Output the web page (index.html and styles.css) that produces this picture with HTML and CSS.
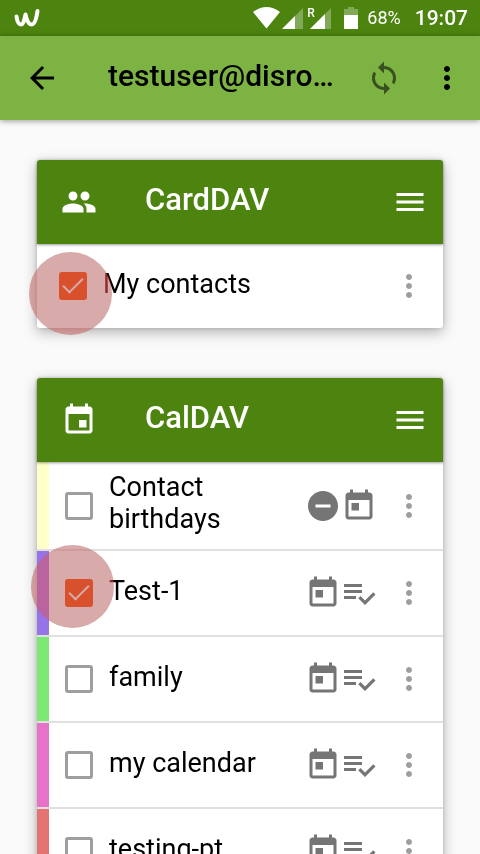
FILE: index.html
```html
<!DOCTYPE html>
<html lang="en">
<head>
<meta charset="utf-8">
<meta name="viewport" content="width=device-width, initial-scale=1">
<title>Account</title>
<link rel="stylesheet" href="styles.css">
</head>
<body>
<svg class="defs" aria-hidden="true">
  <symbol id="more" viewBox="0 0 24 24"><path d="M12 8c1.1 0 2-.9 2-2s-.9-2-2-2-2 .9-2 2 .9 2 2 2zm0 2c-1.1 0-2 .9-2 2s.9 2 2 2 2-.9 2-2-.9-2-2-2zm0 6c-1.1 0-2 .9-2 2s.9 2 2 2 2-.9 2-2-.9-2-2-2z"/></symbol>
  <symbol id="menu" viewBox="0 0 24 24"><path d="M3 18h18v-2H3v2zm0-5h18v-2H3v2zm0-7v2h18V6H3z"/></symbol>
  <symbol id="today" viewBox="0 0 24 24"><path d="M19 3h-1V1h-2v2H8V1H6v2H5c-1.11 0-1.99.9-1.99 2L3 19c0 1.1.89 2 2 2h14c1.1 0 2-.9 2-2V5c0-1.1-.9-2-2-2zm0 16H5V8h14v11zM7 10h5v5H7z"/></symbol>
  <symbol id="tasks" viewBox="0 0 24 24"><path d="M14 10H2v2h12v-2zm0-4H2v2h12V6zM2 16h8v-2H2v2zm19.500-4.500L23 13l-6.990 7-4.510-4.500L13 14l3.010 3 5.490-5.500z"/></symbol>
  <symbol id="readonly" viewBox="0 0 24 24"><path d="M12 2C6.480 2 2 6.480 2 12s4.480 10 10 10 10-4.480 10-10S17.520 2 12 2zm5 11H7v-2h10v2z"/></symbol>
</svg>

<div class="status">
  <svg class="logo" viewBox="0 0 28 24" aria-hidden="true"><path d="M4.500 10.500C5 14 6.500 18.500 9 18.500S12.500 13 13.500 8.500C14.500 13 16.500 18.500 19.500 18.500S24.500 12 25.500 5"/></svg>
  <div class="status-icons">
    <svg class="wifi" viewBox="0 0 27 22" aria-hidden="true"><path d="M0 5Q13.500-5 27 5L13.500 21.500z"/></svg>
    <svg class="signal" viewBox="0 0 21 21" aria-hidden="true"><path class="dim" d="M21 0v21H0z"/><path d="M13 8v13H0z"/></svg>
    <span class="roaming"><span class="roaming-mark">R</span><svg class="signal" viewBox="0 0 21 21" aria-hidden="true"><path class="dim" d="M21 0v21H0z"/><path d="M15 6v15H0z"/></svg></span>
    <svg class="battery" viewBox="0 0 14 22" aria-hidden="true"><path class="dim" d="M4 0h6v2h4v6H0V2h4z"/><path d="M0 8h14v14H0z"/></svg>
  </div>
  <span class="percent">68%</span>
  <span class="time">19:07</span>
</div>

<header class="appbar">
  <button class="btn" aria-label="Back"><svg class="icon" viewBox="0 0 24 24"><path d="M20 11H7.830l5.590-5.590L12 4l-8 8 8 8 1.410-1.410L7.830 13H20v-2z"/></svg></button>
  <h1 class="account">testuser@disro…</h1>
  <button class="btn sync" aria-label="Synchronize"><svg class="icon" viewBox="0 0 24 24"><path d="M12 4V1L8 5l4 4V6c3.310 0 6 2.690 6 6 0 1.010-.25 1.970-.7 2.800l1.460 1.460C19.540 15.030 20 13.570 20 12c0-4.420-3.580-8-8-8zm0 14c-3.310 0-6-2.690-6-6 0-1.010.25-1.970.7-2.800L5.240 7.740C4.460 8.970 4 10.430 4 12c0 4.420 3.580 8 8 8v3l4-4-4-4v3z"/></svg></button>
  <button class="btn" aria-label="More options"><svg class="icon"><use href="#more"/></svg></button>
</header>

<main class="content">
  <section class="card">
    <div class="card-head">
      <svg class="icon" viewBox="0 0 24 24" aria-hidden="true"><path d="M16 11c1.660 0 2.990-1.340 2.990-3S17.660 5 16 5c-1.660 0-3 1.340-3 3s1.340 3 3 3zm-8 0c1.660 0 2.990-1.340 2.990-3S9.660 5 8 5C6.340 5 5 6.340 5 8s1.340 3 3 3zm0 2c-2.330 0-7 1.170-7 3.500V19h14v-2.500c0-2.330-4.670-3.500-7-3.500zm8 0c-.29 0-.62.020-.97.050 1.160.84 1.970 1.970 1.970 3.450V19h6v-2.500c0-2.330-4.670-3.500-7-3.500z"/></svg>
      <h2 class="card-title">CardDAV</h2>
      <button class="btn" aria-label="CardDAV menu"><svg class="icon"><use href="#menu"/></svg></button>
    </div>
    <ul class="list">
      <li class="row plain">
        <span class="pick touched"><input class="check" type="checkbox" id="contacts" checked></span>
        <label class="name" for="contacts">My contacts</label>
        <button class="btn more" aria-label="Options"><svg class="icon"><use href="#more"/></svg></button>
      </li>
    </ul>
  </section>

  <section class="card">
    <div class="card-head">
      <svg class="icon" viewBox="0 0 24 24" aria-hidden="true"><path d="M17 12h-5v5h5v-5zM16 1v2H8V1H6v2H5c-1.110 0-1.990.9-1.990 2L3 19c0 1.100.89 2 2 2h14c1.100 0 2-.9 2-2V5c0-1.100-.9-2-2-2h-1V1h-2zm3 18H5V8h14v11z"/></svg>
      <h2 class="card-title">CalDAV</h2>
      <button class="btn" aria-label="CalDAV menu"><svg class="icon"><use href="#menu"/></svg></button>
    </div>
    <ul class="list">
      <li class="row yellow">
        <span class="pick"><input class="check" type="checkbox" id="birthdays"></span>
        <label class="name" for="birthdays">Contact birthdays</label>
        <span class="kinds"><svg class="icon"><use href="#readonly"/></svg><svg class="icon"><use href="#today"/></svg></span>
        <button class="btn more" aria-label="Options"><svg class="icon"><use href="#more"/></svg></button>
      </li>
      <li class="row purple">
        <span class="pick touched"><input class="check" type="checkbox" id="test1" checked></span>
        <label class="name" for="test1">Test-1</label>
        <span class="kinds"><svg class="icon"><use href="#today"/></svg><svg class="icon"><use href="#tasks"/></svg></span>
        <button class="btn more" aria-label="Options"><svg class="icon"><use href="#more"/></svg></button>
      </li>
      <li class="row green">
        <span class="pick"><input class="check" type="checkbox" id="family"></span>
        <label class="name" for="family">family</label>
        <span class="kinds"><svg class="icon"><use href="#today"/></svg><svg class="icon"><use href="#tasks"/></svg></span>
        <button class="btn more" aria-label="Options"><svg class="icon"><use href="#more"/></svg></button>
      </li>
      <li class="row pink">
        <span class="pick"><input class="check" type="checkbox" id="mycal"></span>
        <label class="name" for="mycal">my calendar</label>
        <span class="kinds"><svg class="icon"><use href="#today"/></svg><svg class="icon"><use href="#tasks"/></svg></span>
        <button class="btn more" aria-label="Options"><svg class="icon"><use href="#more"/></svg></button>
      </li>
      <li class="row red">
        <span class="pick"><input class="check" type="checkbox" id="testing"></span>
        <label class="name" for="testing">testing-pt</label>
        <span class="kinds"><svg class="icon"><use href="#today"/></svg><svg class="icon"><use href="#tasks"/></svg></span>
        <button class="btn more" aria-label="Options"><svg class="icon"><use href="#more"/></svg></button>
      </li>
    </ul>
  </section>
</main>
</body>
</html>
```
FILE: styles.css
```css
* {
  box-sizing: border-box;
}

html {
  scrollbar-width: none;
}

body {
  margin: 0;
  background: #fafafa;
  color: #000;
  font-family: Roboto, "Liberation Sans", sans-serif;
  font-size: 27px;
  line-height: 32px;
}

.defs {
  display: none;
}

.icon {
  display: block;
  flex: none;
  width: 36px;
  height: 36px;
  fill: currentColor;
}

.btn {
  flex: none;
  padding: 0;
  border: 0;
  background: none;
  color: inherit;
}

/* status bar */
.status {
  display: flex;
  align-items: center;
  height: 36px;
  padding: 0 12px;
  background: #4c840f;
  color: #fff;
  fill: #fff;
}

.logo {
  width: 28px;
  height: 24px;
  fill: none;
  stroke: #fff;
  stroke-width: 4;
  stroke-linecap: round;
  stroke-linejoin: round;
}

.status-icons {
  display: flex;
  align-items: center;
  margin-left: auto;
}

.dim {
  opacity: .3;
}

.wifi {
  width: 27px;
  height: 22px;
  margin-right: 2px;
}

.signal {
  display: block;
  width: 21px;
  height: 21px;
}

.roaming {
  position: relative;
  margin: 0 13px 0 7px;
}

.roaming-mark {
  position: absolute;
  left: -3px;
  top: -1px;
  font-size: 12px;
  line-height: 12px;
  font-weight: 500;
}

.battery {
  width: 14px;
  height: 22px;
}

.percent {
  margin-left: 9px;
  font-size: 18px;
}

.time {
  margin-left: 14px;
  font-size: 21px;
  font-weight: 500;
}

/* app bar */
.appbar {
  display: flex;
  align-items: center;
  height: 84px;
  padding: 0 15px 0 24px;
  background: #7cb342;
  box-shadow: 0 1px 6px rgba(0, 0, 0, .4);
}

.account {
  flex: 1;
  min-width: 0;
  margin: 0;
  padding: 0 0 4px 48px;
  white-space: nowrap;
  font-size: 30px;
  font-weight: 500;
}

.sync {
  margin-right: 27px;
  opacity: .54;
}

/* cards */
.content {
  display: flex;
  flex-direction: column;
  gap: 50px;
  padding: 40px 37px;
}

.card {
  border-radius: 3px;
  background: #fff;
  box-shadow: 0 4px 14px rgba(0, 0, 0, .3), 0 0 4px rgba(0, 0, 0, .12);
}

.card-head {
  position: relative;
  display: flex;
  align-items: center;
  height: 84px;
  padding: 0 15px 0 24px;
  border-radius: 3px 3px 0 0;
  background: #4c840f;
  box-shadow: 0 1px 3px rgba(0, 0, 0, .4);
  color: #fff;
}

.card-title {
  flex: 1;
  margin: 0;
  padding: 0 0 4px 48px;
  font-size: 31px;
  font-weight: 500;
}

.list {
  margin: 0;
  padding: 0;
  list-style: none;
}

.row {
  display: flex;
  align-items: center;
  min-height: 84px;
  padding-right: 16px;
}

.row + .row {
  position: relative;
  min-height: 86px;
  border-top: 2px solid #e0e0e0;
}

.row::before {
  content: "";
  align-self: stretch;
  flex: none;
  width: 12px;
  background: var(--tint);
}

.plain::before {
  width: 6px;
}

.yellow { --tint: #ffffc8; }
.purple { --tint: #9673e6; }
.green { --tint: #7ae873; }
.pink { --tint: #e673c8; }
.red { --tint: #e67373; }

.pick {
  position: relative;
  display: grid;
  place-items: center;
  flex: none;
  width: 36px;
  height: 36px;
  margin: 0 12px;
}

.check {
  appearance: none;
  display: grid;
  place-items: center;
  width: 28px;
  height: 28px;
  margin: 0;
  border: 3px solid #9e9e9e;
  border-radius: 3px;
  background: #fff;
}

.check:checked {
  border-color: #ff4c02;
  background: #ff4c02;
}

.check:checked::before {
  content: "";
  width: 18px;
  height: 8px;
  margin-bottom: 6px;
  border: solid #fff;
  border-width: 0 0 2px 2px;
  transform: rotate(-45deg);
}

/* touch indicator: a dark tint, then a red glow over it */
.touched::before,
.touched::after {
  content: "";
  position: absolute;
  z-index: 1;
  left: -30px;
  top: -30px;
  width: 83px;
  height: 83px;
  border-radius: 50%;
  background: rgba(125, 85, 85, .5);
  pointer-events: none;
}

.touched::after {
  background: #660000;
  mix-blend-mode: screen;
}

.plain .touched::before,
.plain .touched::after {
  left: -26px;
  top: -16px;
}

.name {
  flex: 1;
  padding: 9px 0 14px;
}

.kinds {
  display: flex;
  color: #757575;
}

.more {
  margin-left: 14px;
  color: #9e9e9e;
}
```
